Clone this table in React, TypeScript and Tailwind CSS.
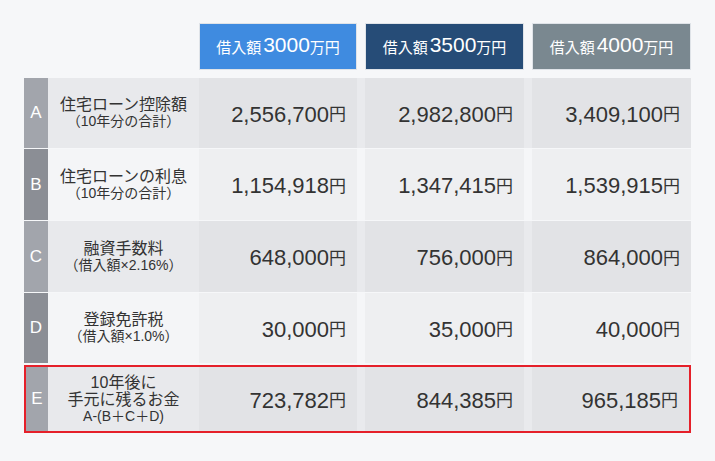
import React from 'react'

type Row = {
  key: string
  lines: string[]
  values: string[]
  odd: boolean
  h: string
  mt: string
}

const rows: Row[] = [
  { key: 'A', lines: ['住宅ローン控除額', '（10年分の合計）'], values: ['2,556,700', '2,982,800', '3,409,100'], odd: true, h: 'h-[70px]', mt: 'mt-0' },
  { key: 'B', lines: ['住宅ローンの利息', '（10年分の合計）'], values: ['1,154,918', '1,347,415', '1,539,915'], odd: false, h: 'h-[71px]', mt: 'mt-px' },
  { key: 'C', lines: ['融資手数料', '（借入額×2.16%）'], values: ['648,000', '756,000', '864,000'], odd: true, h: 'h-[71px]', mt: 'mt-px' },
  { key: 'D', lines: ['登録免許税', '（借入額×1.0%）'], values: ['30,000', '35,000', '40,000'], odd: false, h: 'h-[70px]', mt: 'mt-px' },
]

const headers = [
  { amount: '3000', bg: 'bg-[#3f8be0]' },
  { amount: '3500', bg: 'bg-[#264c77]' },
  { amount: '4000', bg: 'bg-[#7a8890]' },
]

const font = "font-['Liberation_Sans','Noto_Sans_CJK_JP',sans-serif]"

function Value({ v, bg, w }: { v: string; bg: string; w: string }) {
  return (
    <div className={`${w} ${bg} h-full flex items-center justify-end pr-[11px] pt-[3px] text-[#333]`}>
      <span className="text-[22px] leading-none">{v}</span>
      <span className="text-[17px] leading-none">円</span>
    </div>
  )
}

function Cells({ row, last }: { row: { key: string; lines: string[]; values: string[]; odd: boolean }; last?: boolean }) {
  const letterBg = row.odd ? 'bg-[#a2a5ac]' : 'bg-[#8b8e95]'
  const labelBg = row.odd ? 'bg-[#e8e9ec]' : 'bg-[#f4f5f7]'
  const valBg = row.odd ? 'bg-[#e2e3e6]' : 'bg-[#eeeff1]'
  const sepBg = row.odd ? 'bg-[#e9eaed]' : 'bg-[#f5f6f8]'
  return (
    <>
      <div className={`${last ? 'w-[22px]' : 'w-[24px]'} ${letterBg} h-full flex items-center justify-center text-white text-[17px]`}>
        {row.key}
      </div>
      <div className={`w-[151px] ${labelBg} h-full flex flex-col items-center justify-center text-[#333]`}>
        {row.lines.map((l, i) => (
          <div
            key={i}
            className={
              i === 0 || (last && i === 1)
                ? 'text-[16px] leading-[17px]'
                : 'text-[14px] leading-[17px]'
            }
          >
            {l}
          </div>
        ))}
      </div>
      <Value v={row.values[0]} bg={valBg} w="w-[158px]" />
      <div className={`w-[8px] h-full ${sepBg}`} />
      <Value v={row.values[1]} bg={valBg} w="w-[159px]" />
      <div className={`w-[8px] h-full ${sepBg}`} />
      <Value v={row.values[2]} bg={valBg} w={last ? 'w-[157px]' : 'w-[159px]'} />
    </>
  )
}

export default function App() {
  return (
    <div className={`w-[715px] h-[461px] bg-[#f6f7f9] ${font} pt-[23px] pl-[24px]`}>
      <div className="flex ml-[175px] h-[47px]">
        {headers.map((h, i) => (
          <React.Fragment key={h.amount}>
            {i > 0 && <div className="w-[8px]" />}
            <div
              className={`${i === 0 ? 'w-[158px]' : 'w-[159px]'} ${h.bg} border border-[#dfe3e8] flex items-end justify-center pb-[14px] text-white`}
            >
              <span className="text-[15px] leading-none">借入額</span>
              <span className="text-[21px] leading-none ml-[2px]">{h.amount}</span>
              <span className="text-[15px] leading-none">万円</span>
            </div>
          </React.Fragment>
        ))}
      </div>
      <div className="mt-[8px] w-[667px] flex flex-col">
        {rows.map(r => (
          <div key={r.key} className={`flex ${r.h} ${r.mt}`}>
            <Cells row={r} />
          </div>
        ))}
        <div className="mt-[2px] h-[68px] border-2 border-[#e5202a] flex">
          <Cells
            last
            row={{
              key: 'E',
              lines: ['10年後に', '手元に残るお金', 'A-(B＋C＋D)'],
              values: ['723,782', '844,385', '965,185'],
              odd: true,
            }}
          />
        </div>
      </div>
    </div>
  )
}
